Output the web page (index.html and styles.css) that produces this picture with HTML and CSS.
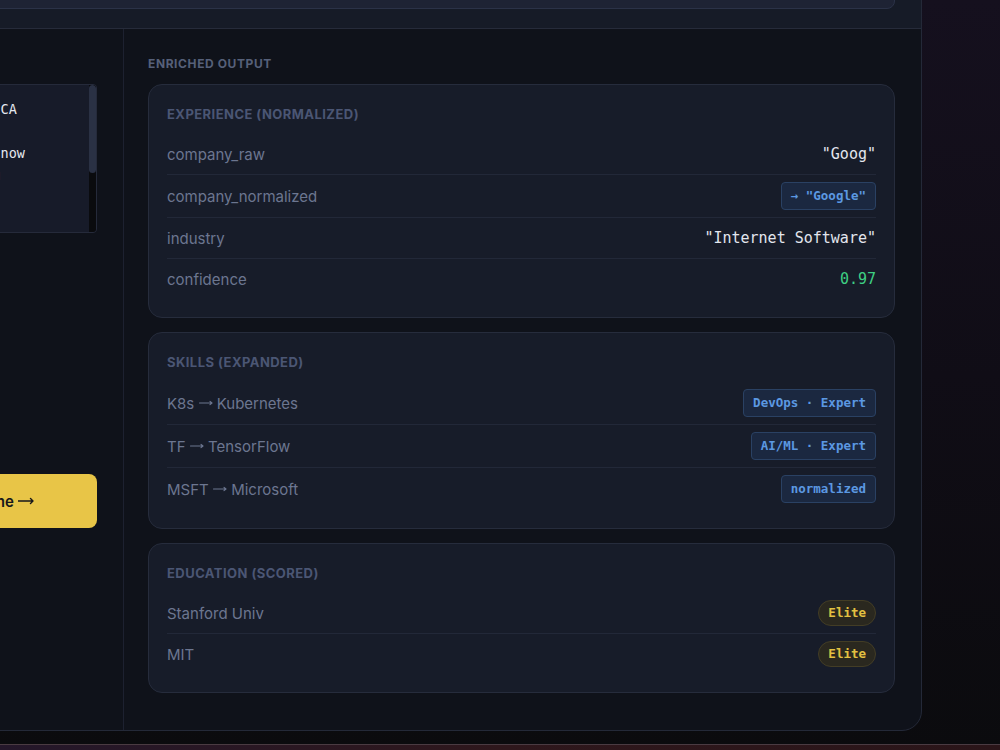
FILE: index.html
```html
<!DOCTYPE html>
<html>
<head>
  <title>Resume Enrichment</title>
  <link rel="stylesheet" href="styles.css">
</head>
<body>
  <div class="window">
    <div class="topbar">
      <div class="topbar-field"></div>
    </div>
    <div class="panes">
      <!-- Raw input side -->
      <section class="pane pane-input">
        <div class="pane-label">Raw input</div>
        <div class="code-box">
          <pre class="code-text">SWE @ Goog · Mountain View, CA
Skills: K8s, TF, MSFT
Senior Engineer, Jan 2019 - now
<span class="code-err">! unverified: degree missing</span>
Stanford Univ, B.S. CS
MIT, M.S. EECS</pre>
          <div class="scrollbar"><div class="scroll-thumb"></div></div>
        </div>
        <button class="enrich-btn">Normalize &amp; Enrich Resume <svg class="arrow arrow-btn" viewBox="0 0 16 8"><path d="M0 4h15M12.5 1.6l2.5 2.4-2.5 2.4"/></svg></button>
      </section>

      <!-- Enriched output side -->
      <section class="pane pane-output">
        <div class="pane-label">Enriched output</div>

        <div class="card">
          <div class="card-title">Experience (normalized)</div>
          <div class="row">
            <span class="key">company_raw</span>
            <span class="val">"Goog"</span>
          </div>
          <div class="row">
            <span class="key">company_normalized</span>
            <span class="tag">→ "Google"</span>
          </div>
          <div class="row">
            <span class="key">industry</span>
            <span class="val">"Internet Software"</span>
          </div>
          <div class="row">
            <span class="key">confidence</span>
            <span class="val val-good">0.97</span>
          </div>
        </div>

        <div class="card">
          <div class="card-title">Skills (expanded)</div>
          <div class="row">
            <span class="key">K8s <svg class="arrow" viewBox="0 0 14 8"><path d="M0.5 4h12.5M11 2.3l2 1.7-2 1.7"/></svg> Kubernetes</span>
            <span class="tag">DevOps · Expert</span>
          </div>
          <div class="row">
            <span class="key">TF <svg class="arrow" viewBox="0 0 14 8"><path d="M0.5 4h12.5M11 2.3l2 1.7-2 1.7"/></svg> TensorFlow</span>
            <span class="tag">AI/ML · Expert</span>
          </div>
          <div class="row">
            <span class="key">MSFT <svg class="arrow" viewBox="0 0 14 8"><path d="M0.5 4h12.5M11 2.3l2 1.7-2 1.7"/></svg> Microsoft</span>
            <span class="tag">normalized</span>
          </div>
        </div>

        <div class="card">
          <div class="card-title">Education (scored)</div>
          <div class="row">
            <span class="key">Stanford Univ</span>
            <span class="pill">Elite</span>
          </div>
          <div class="row">
            <span class="key">MIT</span>
            <span class="pill">Elite</span>
          </div>
        </div>
      </section>
    </div>
  </div>
  <div class="dock"></div>
</body>
</html>
```

FILE: styles.css
```css
/* Page */
body {
  margin: 0;
  height: 750px;
  overflow: hidden;
  background: linear-gradient(180deg, #15101e 0%, #100d16 50%, #0b0b0e 100%);
  font-family: Inter, "DejaVu Sans", sans-serif;
}

.window {
  width: 1197px;
  margin: -50px 0 0 -277px;
  background-color: #0f121a;
  border: 1px solid #242938;
  border-radius: 20px;
}

.topbar {
  padding: 10px 26px 19px 24px;
  background-color: #161b27;
  border-bottom: 1px solid #262b3a;
  border-radius: 20px 20px 0 0;
}

.topbar-field {
  height: 46px;
  background-color: #1e2334;
  border: 1px solid #2b3247;
  border-radius: 8px;
}

.panes {
  display: grid;
  grid-template-columns: 400px 1fr;
}

.pane {
  padding: 27px 26px 37px 24px;
}

.pane-input {
  border-right: 1px solid #1d2130;
  display: flex;
  flex-direction: column;
}

.pane-label {
  font-size: 12px;
  line-height: 16px;
  font-weight: 700;
  letter-spacing: 0.6px;
  text-transform: uppercase;
  color: #566079;
  margin-bottom: 12px;
}

/* Thin long arrow used in labels */
.arrow {
  width: 14px;
  height: 8px;
  fill: none;
  stroke: currentColor;
  stroke-width: 1.1;
  stroke-linecap: round;
  stroke-linejoin: round;
  vertical-align: 2px;
}

.arrow-btn {
  width: 16px;
  stroke-width: 1.4;
}

/* Raw resume text */
.code-box {
  display: flex;
  height: 147px;
  overflow: hidden;
  background-color: #171b29;
  border: 1px solid #252a3a;
  border-radius: 4px;
}

.code-text {
  flex: 1;
  margin: 0;
  padding: 13px 0 0 24px;
  overflow: hidden;
  font-family: "DejaVu Sans Mono", monospace;
  font-size: 13.5px;
  line-height: 22px;
  color: #e6e9f0;
  white-space: pre;
}

.code-err {
  color: #e5484d;
}

.scrollbar {
  width: 7px;
  background-color: #0a0b0e;
}

.scroll-thumb {
  height: 88px;
  background-color: #2a3144;
  border-radius: 4px;
}

.enrich-btn {
  margin-top: 241px;
  height: 54px;
  border: none;
  border-radius: 8px;
  background-color: #e8c547;
  color: #16171b;
  font-family: Inter, sans-serif;
  font-size: 15px;
  font-weight: 600;
  letter-spacing: 0.15px;
}

/* Output cards */
.card {
  background-color: #171c29;
  border: 1px solid #262c3c;
  border-radius: 14px;
  padding: 21px 18px 18px;
  margin-bottom: 14px;
}

.card:last-child {
  margin-bottom: 0;
}

.card-title {
  font-size: 13px;
  line-height: 16px;
  font-weight: 700;
  letter-spacing: 0.45px;
  text-transform: uppercase;
  color: #4b5674;
  margin-bottom: 12px;
}

.row {
  display: flex;
  align-items: center;
  justify-content: space-between;
  min-height: 26px;
  padding: 7px 0;
  border-bottom: 1px solid #222838;
}

.row:last-child {
  border-bottom: none;
}

.key {
  font-size: 15px;
  color: #6c7690;
}

.val {
  font-family: "DejaVu Sans Mono", monospace;
  font-size: 15px;
  color: #e3e6ee;
}

.val-good {
  color: #3ecf83;
}

.tag {
  font-family: "DejaVu Sans Mono", monospace;
  font-size: 12.5px;
  font-weight: 700;
  line-height: 16px;
  padding: 5px 9px;
  color: #5b98e2;
  background-color: #1b2840;
  border: 1px solid #2a4163;
  border-radius: 4px;
}

.pill {
  font-family: "DejaVu Sans Mono", monospace;
  font-size: 12.5px;
  font-weight: 700;
  line-height: 16px;
  padding: 4px 9px;
  color: #e2c141;
  background-color: #2a281f;
  border: 1px solid #433d25;
  border-radius: 13px;
}

/* Strip of the next element below */
.dock {
  margin-top: 13px;
  height: 40px;
  border-top: 1px solid #4a3b42;
  background: linear-gradient(90deg, #24172a 0%, #2e171c 50%, #2a1519 100%);
}
```
